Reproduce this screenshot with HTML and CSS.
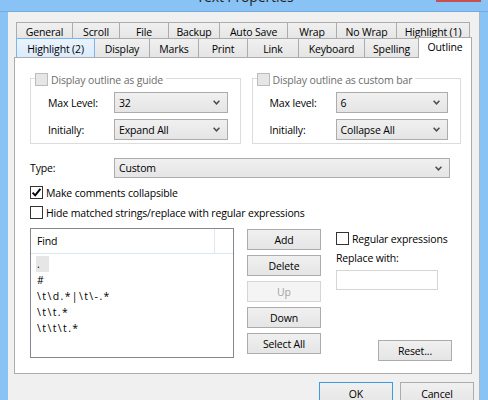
FILE: index.html
```html
<!DOCTYPE html>
<html lang="en">
<head>
  <meta charset="UTF-8">
  <title>Text Properties</title>
  <link rel="stylesheet" href="styles.css">
</head>
<body>
  <div class="titlebar">
    <span class="title">Text Properties</span>
    <span class="close-btn"></span>
  </div>
  <div class="client">
    <div class="tab-row back">
      <div class="tab">General</div>
      <div class="tab">Scroll</div>
      <div class="tab">File</div>
      <div class="tab">Backup</div>
      <div class="tab">Auto Save</div>
      <div class="tab">Wrap</div>
      <div class="tab">No Wrap</div>
      <div class="tab last">Highlight (1)</div>
    </div>
    <div class="tab-row front">
      <div class="tab hover">Highlight (2)</div>
      <div class="tab">Display</div>
      <div class="tab">Marks</div>
      <div class="tab">Print</div>
      <div class="tab">Link</div>
      <div class="tab">Keyboard</div>
      <div class="tab">Spelling</div>
      <div class="tab selected">Outline</div>
    </div>

    <div class="panel">
      <div class="groups">
        <div class="group guide">
          <div class="group-title">
            <span class="checkbox disabled"></span>
            <span>Display outline as guide</span>
          </div>
          <div class="field-row first">
            <span class="field-label">Max Level:</span>
            <div class="combo">
              <span>32</span>
              <svg class="chevron" width="7" height="5" viewBox="0 0 7 5"><polyline points="0.6,0.8 3.5,3.8 6.4,0.8" fill="none" stroke="#4d4d4d" stroke-width="1.5"/></svg>
            </div>
          </div>
          <div class="field-row">
            <span class="field-label">Initially:</span>
            <div class="combo">
              <span>Expand All</span>
              <svg class="chevron" width="7" height="5" viewBox="0 0 7 5"><polyline points="0.6,0.8 3.5,3.8 6.4,0.8" fill="none" stroke="#4d4d4d" stroke-width="1.5"/></svg>
            </div>
          </div>
        </div>
        <div class="group bar">
          <div class="group-title">
            <span class="checkbox disabled"></span>
            <span>Display outline as custom bar</span>
          </div>
          <div class="field-row first">
            <span class="field-label">Max level:</span>
            <div class="combo">
              <span>6</span>
              <svg class="chevron" width="7" height="5" viewBox="0 0 7 5"><polyline points="0.6,0.8 3.5,3.8 6.4,0.8" fill="none" stroke="#4d4d4d" stroke-width="1.5"/></svg>
            </div>
          </div>
          <div class="field-row">
            <span class="field-label">Initially:</span>
            <div class="combo">
              <span>Collapse All</span>
              <svg class="chevron" width="7" height="5" viewBox="0 0 7 5"><polyline points="0.6,0.8 3.5,3.8 6.4,0.8" fill="none" stroke="#4d4d4d" stroke-width="1.5"/></svg>
            </div>
          </div>
        </div>
      </div>

      <div class="type-row">
        <span class="type-label">Type:</span>
        <div class="combo wide">
          <span>Custom</span>
          <svg class="chevron" width="7" height="5" viewBox="0 0 7 5"><polyline points="0.6,0.8 3.5,3.8 6.4,0.8" fill="none" stroke="#4d4d4d" stroke-width="1.5"/></svg>
        </div>
      </div>

      <div class="check-row collapsible">
        <span class="checkbox">
          <svg width="11" height="11" viewBox="0 0 11 11"><path d="M1.6 5.6 L4.2 8.3 L9.4 1.8" fill="none" stroke="#000" stroke-width="1.9"/></svg>
        </span>
        <span>Make comments collapsible</span>
      </div>
      <div class="check-row hide-matched">
        <span class="checkbox"></span>
        <span>Hide matched strings/replace with regular expressions</span>
      </div>

      <div class="list-area">
        <div class="listbox">
          <div class="list-header">
            <div class="col-find">Find</div>
            <div class="col-rest"></div>
          </div>
          <div class="list-body">
            <div class="item"><span class="sel">.</span></div>
            <div class="item">#</div>
            <div class="item">\t\d.*|\t\-.*</div>
            <div class="item">\t\t.*</div>
            <div class="item">\t\t\t.*</div>
          </div>
        </div>

        <div class="button-col">
          <div class="btn">Add</div>
          <div class="btn">Delete</div>
          <div class="btn disabled">Up</div>
          <div class="btn">Down</div>
          <div class="btn">Select All</div>
        </div>

        <div class="replace-col">
          <div class="check-row">
            <span class="checkbox"></span>
            <span>Regular expressions</span>
          </div>
          <div class="replace-label">Replace with:</div>
          <div class="replace-input"></div>
          <div class="btn reset">Reset...</div>
        </div>
      </div>
    </div>

    <div class="dialog-buttons">
      <div class="btn default">OK</div>
      <div class="btn">Cancel</div>
    </div>
  </div>
</body>
</html>
```

FILE: styles.css
```css
* {
  box-sizing: border-box;
}
body {
  margin: 0;
  width: 488px;
  height: 400px;
  overflow: hidden;
  background-color: #89c3f6;
  font-family: "Open Sans", sans-serif;
  font-size: 10.5px;
  letter-spacing: -0.15px;
  color: #000;
}
.titlebar {
  position: relative;
  height: 12px;
  border-bottom: 1px solid #78abdb;
  text-align: center;
  overflow: hidden;
}
.title {
  display: block;
  font-size: 14px;
  line-height: 18px;
  margin-top: -12px;
  padding-left: 2px;
  color: #222;
}
.close-btn {
  position: absolute;
  top: 0;
  right: 7px;
  width: 45px;
  height: 2px;
  background-color: #c75050;
}
.client {
  margin: 0 8px;
  height: 388px;
  padding: 10px 7px 0 6px;
  background-color: #f0f0f0;
  border-right: 1px solid #a9b6c4;
}

/* tabs */
.tab-row {
  display: grid;
  margin-left: 2px;
}
.tab-row.back {
  grid-template-columns: 56px 47px 49px 51px 68px 49px 60px 74px;
  height: 16px;
}
.tab-row.front {
  grid-template-columns: 78px 55px 49px 49px 51px 66px 54px 54px;
  height: 19px;
}
.tab {
  display: flex;
  align-items: center;
  justify-content: center;
  padding-top: 2px;
  border-top: 1px solid #acacac;
  border-left: 1px solid #acacac;
  background: linear-gradient(#f0f0f0, #e5e5e5);
  white-space: nowrap;
}
.tab.last {
  border-right: 1px solid #acacac;
}
.tab.hover {
  background: linear-gradient(#e9f3fc, #dcecfc);
  border-color: #7eb4ea;
  border-right: 1px solid #7eb4ea;
  margin-right: -1px;
  position: relative;
  z-index: 1;
}
.tab.selected {
  position: relative;
  z-index: 2;
  margin-top: -1px;
  margin-bottom: -1px;
  padding-top: 0;
  padding-bottom: 2px;
  background: #fff;
  border-right: 1px solid #acacac;
}

/* panel */
.panel {
  height: 317px;
  padding: 20px 10px 0 15px;
  background-color: #fff;
  border: 1px solid #acacac;
}
.groups {
  display: flex;
  gap: 11px;
}
.group {
  display: flex;
  flex-direction: column;
  height: 66px;
  border: 1px solid #dcdcdc;
}
.group.guide {
  width: 211px;
}
.group.bar {
  width: 210px;
}
.group-title {
  display: flex;
  align-items: center;
  align-self: flex-start;
  gap: 3px;
  height: 15px;
  margin: -7px 0 0 4px;
  padding-right: 3px;
  background-color: #fff;
  color: #6d6d6d;
}
.field-row {
  display: flex;
  align-items: center;
  height: 21px;
  margin-top: 6px;
  padding-left: 17px;
}
.field-row.first {
  margin-top: 5px;
}
.field-label {
  width: 66px;
  flex: none;
}
.combo {
  display: flex;
  align-items: center;
  justify-content: space-between;
  height: 21px;
  padding: 0 7px 0 4px;
  border: 1px solid #acacac;
  background: linear-gradient(#f0f0f0, #e5e5e5);
}
.guide .combo {
  width: 114px;
}
.bar .combo {
  width: 112px;
}
.combo.wide {
  width: 336px;
  height: 20px;
}
.chevron {
  display: block;
}

.type-row {
  display: flex;
  align-items: center;
  margin-top: 14px;
}
.type-label {
  width: 84px;
}

/* checkboxes */
.checkbox {
  display: flex;
  align-items: center;
  justify-content: center;
  flex: none;
  width: 13px;
  height: 13px;
  border: 1px solid #333;
  background-color: #fff;
}
.checkbox.disabled {
  border-color: #bcbcbc;
  background-color: #e6e6e6;
}
.check-row {
  display: flex;
  align-items: center;
  gap: 3px;
  height: 13px;
  white-space: nowrap;
}
.collapsible {
  margin-top: 8px;
}
.hide-matched {
  margin-top: 7px;
}

/* list and buttons */
.list-area {
  display: flex;
  margin-top: 9px;
}
.listbox {
  width: 204px;
  height: 130px;
  border: 1px solid #828790;
  flex: none;
}
.list-header {
  display: flex;
  height: 25px;
  border-bottom: 1px solid #dde7f1;
}
.col-find {
  width: 184px;
  padding: 5px 0 0 6px;
  border-right: 1px solid #e3e8ee;
}
.list-body {
  padding-top: 2px;
}
.item {
  height: 16px;
  line-height: 16px;
  padding-left: 6px;
  letter-spacing: 1.4px;
}
.sel {
  display: inline-block;
  width: 13px;
  margin-left: -1px;
  padding-left: 1px;
  background-color: #e6e6e6;
}
.button-col {
  display: flex;
  flex-direction: column;
  gap: 5px;
  margin: 1px 0 0 13px;
}
.btn {
  display: flex;
  align-items: center;
  justify-content: center;
  width: 74px;
  height: 21px;
  border: 1px solid #acacac;
  background: linear-gradient(#f0f0f0, #e5e5e5);
}
.btn.disabled {
  color: #a3a3a3;
  border-color: #d5d5d5;
  background: #f4f4f4;
}
.replace-col {
  display: flex;
  flex-direction: column;
  width: 116px;
  margin-left: 15px;
  padding-top: 4px;
}
.replace-label {
  margin-top: 6px;
  line-height: 15px;
}
.replace-input {
  width: 102px;
  height: 20px;
  margin-top: 4px;
  border: 1px solid #d5d5d5;
  background-color: #fff;
}
.btn.reset {
  align-self: flex-end;
  margin-top: 50px;
}

.dialog-buttons {
  display: flex;
  justify-content: flex-end;
  gap: 7px;
  margin: 8px -2px 0 0;
}
.dialog-buttons .btn {
  height: 23px;
}
.btn.default {
  border-color: #3c9ae5;
}
```
